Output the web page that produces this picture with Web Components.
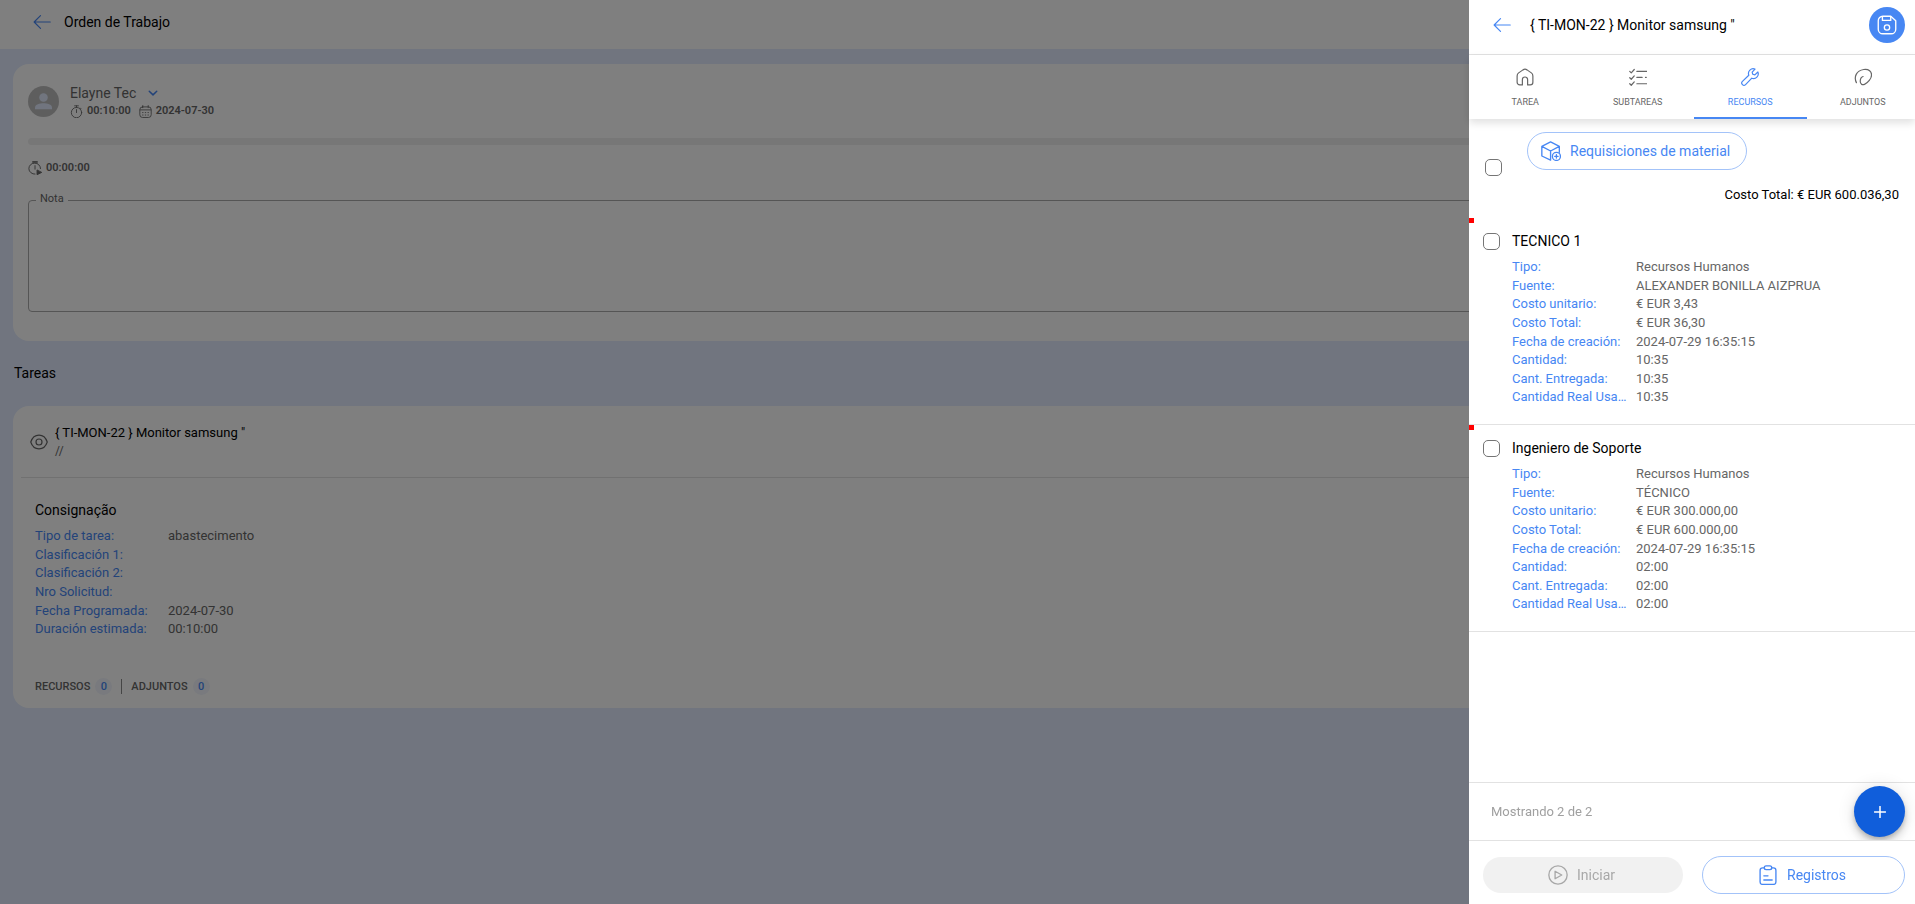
<!DOCTYPE html>
<html lang="es">
<head>
<meta charset="utf-8">
<meta name="viewport" content="width=device-width, initial-scale=1">
<title>Orden de Trabajo</title>
<style>
  :root {
    --primary: #4787f3;
    --primary-dark: #105edb;
    --primary-border: #a3c3f9;
    --text: #000;
    --muted: #666;
    --line: #e2e2e2;
    --page: #e2ebfe;
  }
  body {
    margin: 0;
    background: var(--page);
    color: var(--text);
    font-family: Roboto, "Liberation Sans", sans-serif;
    font-size: 13px;
  }
</style>
</head>
<body>
<work-order></work-order>
<side-drawer></side-drawer>

<script>
const ICONS = {
  back: `<path d="M23 12H1.500M10 3.500L1.500 12L10 20.500"/>`,
  chevron: `<path d="M3 8l9 8.500L21 8" stroke-width="3.500"/>`,
  person: `<g fill="currentColor" stroke="none"><circle cx="12" cy="6.500" r="6"/><path d="M0 23v-2.500C0 16 7 14.500 12 14.500s12 1.500 12 6V23z"/></g>`,
  timer: `<circle cx="12" cy="14" r="9.500"/><path d="M12 8.500v5.500M8.500 1.500h7M12 1.500v3M19 5.500l1.500 1.500"/>`,
  calendar: `<rect x="1.500" y="3.500" width="21" height="19.500" rx="5"/><path d="M7 1v4M17 1v4M2 9h20"/><path d="M6.500 14h1M11.500 14h1M16.500 14h1M6.500 18.500h1M11.500 18.500h1M16.500 18.500h1"/>`,
  timerplay: `<path d="M21.500 13a10 9.500 0 1 0-9.500 9.500M12 8v6M8 1h8M8 3h8"/><path d="M15.500 16v7.500l7.500-3.700z" fill="currentColor"/>`,
  eye: `<path d="M1 12C3 6 7 2.800 12 2.800S21 6 23 12c-2 6-6 9.200-11 9.200S3 18 1 12z"/><circle cx="12" cy="12" r="4"/>`,
  home: `<path d="M8.500 22.500H5A3.500 3.500 0 0 1 1.500 19V10.500a5 5 0 0 1 2-4L9.300 2.500a5 5 0 0 1 5.400 0l5.800 4a5 5 0 0 1 2 4V19a3.500 3.500 0 0 1-3.500 3.500h-3.500V15.500a3.500 3.500 0 0 0-7 0z"/>`,
  list: `<path d="M1 4.500l2 2L7 2M1 13l2 2 4-4.500M1 21l2 2 4-4.500M10.500 4.500H23.500M10.500 12.500h7M22 12.500h1M10.500 21H23.500"/>`,
  wrench: `<path d="M22.500 5.300l-4 3.800-2.800-.8-.8-2.800 3.800-4A6.300 6.300 0 0 0 10.400 9.600L1.900 17.900a2.900 2.900 0 0 0 4.200 4.200l8.300-8.500A6.300 6.300 0 0 0 22.500 5.300z"/>`,
  clip: `<path d="M3.200 19.500C-.5 12 3 3.500 13 2c7-1 10.400 3 10.400 7.200 0 4.800-4.900 10.800-9.400 12.600-2.500 1-5.700.5-5.700-4 0-3 1-5.500 3.800-6.400"/>`,
  save: `<path d="M7 1.500h9.500L22.500 7v10a5.500 5.500 0 0 1-5.500 5.500H7A5.500 5.500 0 0 1 1.500 17V7A5.500 5.500 0 0 1 7 1.500z"/><path d="M6.500 2v4.500h10V2"/><circle cx="12" cy="15" r="3.200"/>`,
  box: `<path d="M11.500 23L1 18V6.500L11.500 1 22 6.500v7M1 6.500l10.500 5.500L22 6.500M11.500 12v11"/><circle cx="18.500" cy="18.500" r="4.800" fill="#fff"/><path d="M18.500 16.500v4M16.500 18.500h4"/>`,
  play: `<circle cx="12" cy="12" r="11"/><path d="M8.500 7.500v9l8-4.500z"/>`,
  clipboard: `<rect x="2.500" y="3.500" width="19" height="19.800" rx="3"/><rect x="7.500" y="1" width="9" height="4.500" rx="2.200" fill="#fff"/><path d="M7 13h5M7 18h10"/>`,
  plus: `<path d="M12 1v22M1 12h22" stroke-width="3"/>`
};

class AppIcon extends HTMLElement {
  constructor() {
    super();
    this.shadowDOM = this.attachShadow({ mode: "open" });
  }

  connectedCallback() {
    const size = this.getAttribute("size") || 18;
    this.shadowDOM.innerHTML = `
    <style>
    :host {
      display: block;
      flex: none;
      width: ${size}px;
      height: ${size}px;
    }
    svg {
      display: block;
    }
    </style>
    <svg width="${size}" height="${size}" viewBox="0 0 24 24" fill="none" stroke="currentColor"
      stroke-width="1.600" stroke-linecap="round" stroke-linejoin="round" aria-hidden="true">${ICONS[this.getAttribute("name")]}</svg>`;
  }
}
customElements.define("app-icon", AppIcon);

class IconButton extends HTMLElement {
  constructor() {
    super();
    this.shadowDOM = this.attachShadow({ mode: "open" });
  }

  connectedCallback() {
    this.shadowDOM.innerHTML = `
    <style>
    :host {
      display: block;
      flex: none;
      color: var(--primary);
    }
    button {
      display: flex;
      align-items: center;
      justify-content: center;
      padding: 0;
      border: 0;
      background: none;
      color: inherit;
      cursor: pointer;
    }
    :host([kind="save"]) button {
      width: 36px;
      height: 36px;
      border-radius: 50%;
      background: var(--primary);
      color: white;
    }
    :host([kind="fab"]) button {
      width: 51px;
      height: 51px;
      border-radius: 50%;
      background: var(--primary-dark);
      color: white;
      box-shadow: 0 3px 5px -1px rgba(0, 0, 0, .2), 0 6px 10px rgba(0, 0, 0, .14), 0 1px 18px rgba(0, 0, 0, .12);
    }
    </style>
    <button type="button" aria-label="${this.getAttribute("label")}">
      <app-icon name="${this.getAttribute("icon")}" size="${this.getAttribute("size") || 18}"></app-icon>
    </button>`;
  }
}
customElements.define("icon-button", IconButton);

class PillButton extends HTMLElement {
  constructor() {
    super();
    this.shadowDOM = this.attachShadow({ mode: "open" });
  }

  connectedCallback() {
    this.shadowDOM.innerHTML = `
    <style>
    :host {
      display: block;
    }
    button {
      display: flex;
      align-items: center;
      justify-content: center;
      gap: 9px;
      box-sizing: border-box;
      width: 100%;
      height: 38px;
      padding: 0 16px 0 13px;
      border: 1px solid var(--primary-border);
      border-radius: 19px;
      background: white;
      color: var(--primary);
      font: inherit;
      font-size: 14px;
      cursor: pointer;
    }
    button:disabled {
      height: 36px;
      border: 0;
      background: #f1f1f1;
      color: #a8a8a8;
      cursor: default;
    }
    </style>
    <button type="button" ${this.hasAttribute("disabled") ? "disabled" : ""}>
      <app-icon name="${this.getAttribute("icon")}" size="20"></app-icon>
      <slot></slot>
    </button>`;
  }
}
customElements.define("pill-button", PillButton);

// label / value rows
class DataList extends HTMLElement {
  constructor() {
    super();
    this.shadowDOM = this.attachShadow({ mode: "open" });
  }

  set rows(rows) {
    this._rows = rows;
    this.render();
  }

  render() {
    this.shadowDOM.innerHTML = `
    <style>
    :host {
      display: block;
    }
    dl {
      display: grid;
      grid-template-columns: var(--label-width, 116px) 1fr;
      grid-auto-rows: 1fr;
      column-gap: 8px;
      min-height: var(--list-height, 0);
      margin: 0;
      line-height: 18px;
    }
    dt,
    dd {
      margin: 0;
      white-space: nowrap;
    }
    dt {
      color: var(--primary);
    }
    dd {
      color: var(--muted);
    }
    </style>
    <dl>${this._rows.map(([label, value]) => `<dt>${label}</dt><dd>${value}</dd>`).join("")}</dl>`;
  }
}
customElements.define("data-list", DataList);

class CountLink extends HTMLElement {
  constructor() {
    super();
    this.shadowDOM = this.attachShadow({ mode: "open" });
  }

  connectedCallback() {
    this.shadowDOM.innerHTML = `
    <style>
    :host {
      display: block;
    }
    a {
      display: flex;
      align-items: center;
      gap: 5px;
      color: var(--muted);
      font-size: 11px;
      font-weight: 500;
      text-decoration: none;
    }
    span {
      width: 17px;
      border-radius: 50%;
      background: #f2f5fd;
      color: var(--primary);
      line-height: 17px;
      text-align: center;
    }
    </style>
    <a href="#"><slot></slot><span>${this.getAttribute("count")}</span></a>`;
  }
}
customElements.define("count-link", CountLink);

class NoteField extends HTMLElement {
  constructor() {
    super();
    this.shadowDOM = this.attachShadow({ mode: "open" });
  }

  connectedCallback() {
    this.shadowDOM.innerHTML = `
    <style>
    :host {
      display: block;
      position: relative;
    }
    label {
      position: absolute;
      top: -8px;
      left: 8px;
      padding: 0 4px;
      background: white;
      color: var(--muted);
      font-size: 11px;
      line-height: 14px;
    }
    textarea {
      display: block;
      box-sizing: border-box;
      width: 100%;
      height: 112px;
      padding: 12px;
      border: 1px solid #aaa;
      border-radius: 4px;
      background: none;
      font: inherit;
      resize: none;
    }
    </style>
    <textarea id="note"></textarea>
    <label for="note">Nota</label>`;
  }
}
customElements.define("note-field", NoteField);

class UserCard extends HTMLElement {
  constructor() {
    super();
    this.shadowDOM = this.attachShadow({ mode: "open" });
  }

  connectedCallback() {
    this.shadowDOM.innerHTML = `
    <style>
    :host {
      display: block;
      padding: 19px 15px 29px;
      border-radius: 16px;
      background: white;
      color: var(--muted);
    }
    .user,
    .name,
    .meta {
      display: flex;
      align-items: center;
    }
    .user {
      gap: 11px;
      height: 36px;
    }
    .avatar {
      display: flex;
      align-items: center;
      justify-content: center;
      width: 31px;
      height: 31px;
      border-radius: 50%;
      background: #bdbdbd;
      color: var(--page);
    }
    .name {
      gap: 12px;
      font-size: 14px;
      line-height: 20px;
    }
    .meta {
      gap: 4px;
      font-size: 11px;
      font-weight: 600;
      line-height: 16px;
    }
    .meta span {
      margin-right: 4px;
    }
    .bar {
      height: 7px;
      margin: 19px 0 15px;
      border-radius: 4px;
      background: #eee;
    }
    note-field {
      margin-top: 24px;
    }
    </style>
    <div class="user">
      <div class="avatar"><app-icon name="person" size="17"></app-icon></div>
      <div>
        <div class="name">Elayne Tec <icon-button icon="chevron" size="10" label="Cambiar usuario"></icon-button></div>
        <div class="meta">
          <app-icon name="timer" size="13"></app-icon><span>00:10:00</span>
          <app-icon name="calendar" size="13"></app-icon><span>2024-07-30</span>
        </div>
      </div>
    </div>
    <div class="bar" role="progressbar" aria-valuenow="0"></div>
    <div class="meta"><app-icon name="timerplay" size="14"></app-icon><span>00:00:00</span></div>
    <note-field></note-field>`;
  }
}
customElements.define("user-card", UserCard);

class TaskCard extends HTMLElement {
  constructor() {
    super();
    this.shadowDOM = this.attachShadow({ mode: "open" });
  }

  set task(task) {
    this._task = task;
    this.render();
  }

  render() {
    this.shadowDOM.innerHTML = `
    <style>
    :host {
      display: block;
      padding: 0 8px 13px;
      border-radius: 16px;
      background: white;
    }
    header {
      display: flex;
      align-items: center;
      gap: 7px;
      height: 71px;
      padding-left: 9px;
      border-bottom: 1px solid var(--line);
    }
    header icon-button {
      color: var(--muted);
    }
    .title {
      line-height: 18px;
    }
    .sub {
      color: var(--muted);
      font-size: 12px;
      line-height: 18px;
    }
    .body {
      padding: 21px 14px 0;
    }
    h2 {
      margin: 0 0 6px;
      font-size: 14px;
      font-weight: 400;
      line-height: 22px;
    }
    data-list {
      --label-width: 125px;
      --list-height: 112px;
    }
    footer {
      display: flex;
      align-items: center;
      gap: 9px;
      margin-top: 39px;
    }
    hr {
      width: 1px;
      height: 15px;
      margin: 0;
      border: 0;
      background: #8a8a8a;
    }
    </style>
    <header>
      <icon-button icon="eye" label="Ver tarea"></icon-button>
      <div>
        <div class="title">${this._task.title}</div>
        <div class="sub">//</div>
      </div>
    </header>
    <div class="body">
      <h2>${this._task.name}</h2>
      <data-list></data-list>
      <footer>
        <count-link count="0">RECURSOS</count-link>
        <hr>
        <count-link count="0">ADJUNTOS</count-link>
      </footer>
    </div>`;
    this.shadowDOM.querySelector("data-list").rows = this._task.rows;
  }
}
customElements.define("task-card", TaskCard);

class WorkOrder extends HTMLElement {
  constructor() {
    super();
    this.shadowDOM = this.attachShadow({ mode: "open" });
  }

  connectedCallback() {
    this.shadowDOM.innerHTML = `
    <style>
    :host {
      display: block;
    }
    header {
      display: flex;
      align-items: center;
      gap: 13px;
      box-sizing: border-box;
      height: 49px;
      padding: 0 33px 5px;
      background: white;
    }
    h1,
    h2 {
      margin: 0;
      font-size: 14px;
      font-weight: 400;
      line-height: 20px;
    }
    main {
      padding: 15px 13px;
    }
    h2 {
      padding: 22px 1px 23px;
    }
    </style>
    <header>
      <icon-button icon="back" label="Volver"></icon-button>
      <h1>Orden de Trabajo</h1>
    </header>
    <main>
      <user-card></user-card>
      <h2>Tareas</h2>
      <task-card></task-card>
    </main>`;
    this.shadowDOM.querySelector("task-card").task = {
      title: `{ TI-MON-22 } Monitor samsung "`,
      name: "Consignação",
      rows: [
        ["Tipo de tarea:", "abastecimento"],
        ["Clasificación 1:", ""],
        ["Clasificación 2:", ""],
        ["Nro Solicitud:", ""],
        ["Fecha Programada:", "2024-07-30"],
        ["Duración estimada:", "00:10:00"]
      ]
    };
  }
}
customElements.define("work-order", WorkOrder);

class DrawerTabs extends HTMLElement {
  constructor() {
    super();
    this.shadowDOM = this.attachShadow({ mode: "open" });
  }

  connectedCallback() {
    const tabs = [["home", "TAREA"], ["list", "SUBTAREAS"], ["wrench", "RECURSOS"], ["clip", "ADJUNTOS"]];
    this.shadowDOM.innerHTML = `
    <style>
    :host {
      display: block;
      overflow: hidden;
    }
    div {
      display: flex;
      margin-right: -4px;
    }
    button {
      display: flex;
      flex: 1 1 0;
      flex-direction: column;
      align-items: center;
      gap: 10px;
      box-sizing: border-box;
      height: 64px;
      padding: 13px 0 0;
      border: 0;
      border-bottom: 2px solid transparent;
      background: none;
      color: var(--muted);
      font: inherit;
      font-size: 9px;
      line-height: 12px;
      cursor: pointer;
    }
    button[aria-selected="true"] {
      border-color: var(--primary);
      color: var(--primary);
    }
    </style>
    <div role="tablist">${tabs.map(([icon, text]) => `
      <button type="button" role="tab" aria-selected="${text === "RECURSOS"}"><app-icon name="${icon}"></app-icon>${text}</button>`).join("")}
    </div>`;
  }
}
customElements.define("drawer-tabs", DrawerTabs);

const CHECKBOX = `
    input {
      appearance: none;
      flex: none;
      box-sizing: border-box;
      width: 17px;
      height: 17px;
      margin: 0;
      border: 1px solid #757575;
      border-radius: 5px;
      background: white;
    }`;

class ResourceItem extends HTMLElement {
  constructor() {
    super();
    this.shadowDOM = this.attachShadow({ mode: "open" });
  }

  set resource(resource) {
    this._resource = resource;
    this.render();
  }

  render() {
    this.shadowDOM.innerHTML = `
    <style>
    ${CHECKBOX}
    :host {
      display: block;
      border-bottom: 1px solid var(--line);
    }
    .flag {
      width: 5px;
      height: 5px;
      background: red;
    }
    .body {
      padding: 8px 14px 17px;
    }
    label {
      display: flex;
      align-items: center;
      gap: 12px;
      font-size: 14px;
      line-height: 20px;
    }
    data-list {
      --list-height: 149px;
      padding: 7px 0 0 29px;
    }
    </style>
    <div class="flag"></div>
    <div class="body">
      <label><input type="checkbox">${this._resource.name}</label>
      <data-list></data-list>
    </div>`;
    this.shadowDOM.querySelector("data-list").rows = this._resource.rows;
  }
}
customElements.define("resource-item", ResourceItem);

const RESOURCES = [
  {
    name: "TECNICO 1",
    rows: [
      ["Tipo:", "Recursos Humanos"],
      ["Fuente:", "ALEXANDER BONILLA AIZPRUA"],
      ["Costo unitario:", "€ EUR 3,43"],
      ["Costo Total:", "€ EUR 36,30"],
      ["Fecha de creación:", "2024-07-29 16:35:15"],
      ["Cantidad:", "10:35"],
      ["Cant. Entregada:", "10:35"],
      ["Cantidad Real Usa…", "10:35"]
    ]
  },
  {
    name: "Ingeniero de Soporte",
    rows: [
      ["Tipo:", "Recursos Humanos"],
      ["Fuente:", "TÉCNICO"],
      ["Costo unitario:", "€ EUR 300.000,00"],
      ["Costo Total:", "€ EUR 600.000,00"],
      ["Fecha de creación:", "2024-07-29 16:35:15"],
      ["Cantidad:", "02:00"],
      ["Cant. Entregada:", "02:00"],
      ["Cantidad Real Usa…", "02:00"]
    ]
  }
];

class SideDrawer extends HTMLElement {
  constructor() {
    super();
    this.shadowDOM = this.attachShadow({ mode: "open" });
  }

  connectedCallback() {
    this.shadowDOM.innerHTML = `
    <style>
    ${CHECKBOX}
    :host {
      display: flex;
      position: fixed;
      inset: 0;
      justify-content: flex-end;
      background: rgba(0, 0, 0, .5);
    }
    aside {
      display: flex;
      flex-direction: column;
      width: 446px;
      max-width: 100%;
      background: white;
    }
    header {
      display: flex;
      align-items: center;
      box-sizing: border-box;
      height: 55px;
      padding: 0 10px 4px 24px;
      border-bottom: 1px solid var(--line);
    }
    h1 {
      flex: 1;
      margin: 0 0 0 19px;
      font-size: 14px;
      font-weight: 400;
    }
    drawer-tabs {
      box-shadow: 0 4px 8px rgba(0, 0, 0, .12);
    }
    .content {
      flex: 1;
      min-height: 0;
      overflow: auto;
    }
    .select {
      display: flex;
      align-items: flex-start;
      gap: 25px;
      padding: 13px 16px 9px;
    }
    .select input {
      margin-top: 27px;
    }
    .total {
      margin: 0 16px 13px;
      line-height: 20px;
      text-align: right;
    }
    .count {
      display: flex;
      align-items: center;
      justify-content: space-between;
      box-sizing: border-box;
      height: 58px;
      padding: 0 10px 0 22px;
      border-top: 1px solid var(--line);
      color: #a0a0a0;
    }
    footer {
      display: grid;
      grid-template-columns: 200px 1fr;
      align-items: center;
      gap: 19px;
      box-sizing: border-box;
      height: 64px;
      padding: 5px 10px 0 14px;
      border-top: 1px solid var(--line);
      background: white;
    }
    </style>
    <aside>
      <header>
        <icon-button icon="back" label="Volver"></icon-button>
        <h1>{ TI-MON-22 } Monitor samsung "</h1>
        <icon-button kind="save" icon="save" size="20" label="Guardar"></icon-button>
      </header>
      <drawer-tabs></drawer-tabs>
      <div class="content">
        <div class="select">
          <input type="checkbox" aria-label="Seleccionar todo">
          <pill-button icon="box">Requisiciones de material</pill-button>
        </div>
        <div class="total">Costo Total: € EUR 600.036,30</div>
      </div>
      <div class="count">
        Mostrando 2 de 2
        <icon-button kind="fab" icon="plus" size="12" label="Agregar"></icon-button>
      </div>
      <footer>
        <pill-button icon="play" disabled>Iniciar</pill-button>
        <pill-button icon="clipboard">Registros</pill-button>
      </footer>
    </aside>`;

    const content = this.shadowDOM.querySelector(".content");
    RESOURCES.forEach((resource) => {
      const item = document.createElement("resource-item");
      item.resource = resource;
      content.appendChild(item);
    });
  }
}
customElements.define("side-drawer", SideDrawer);
</script>
</body>
</html>
